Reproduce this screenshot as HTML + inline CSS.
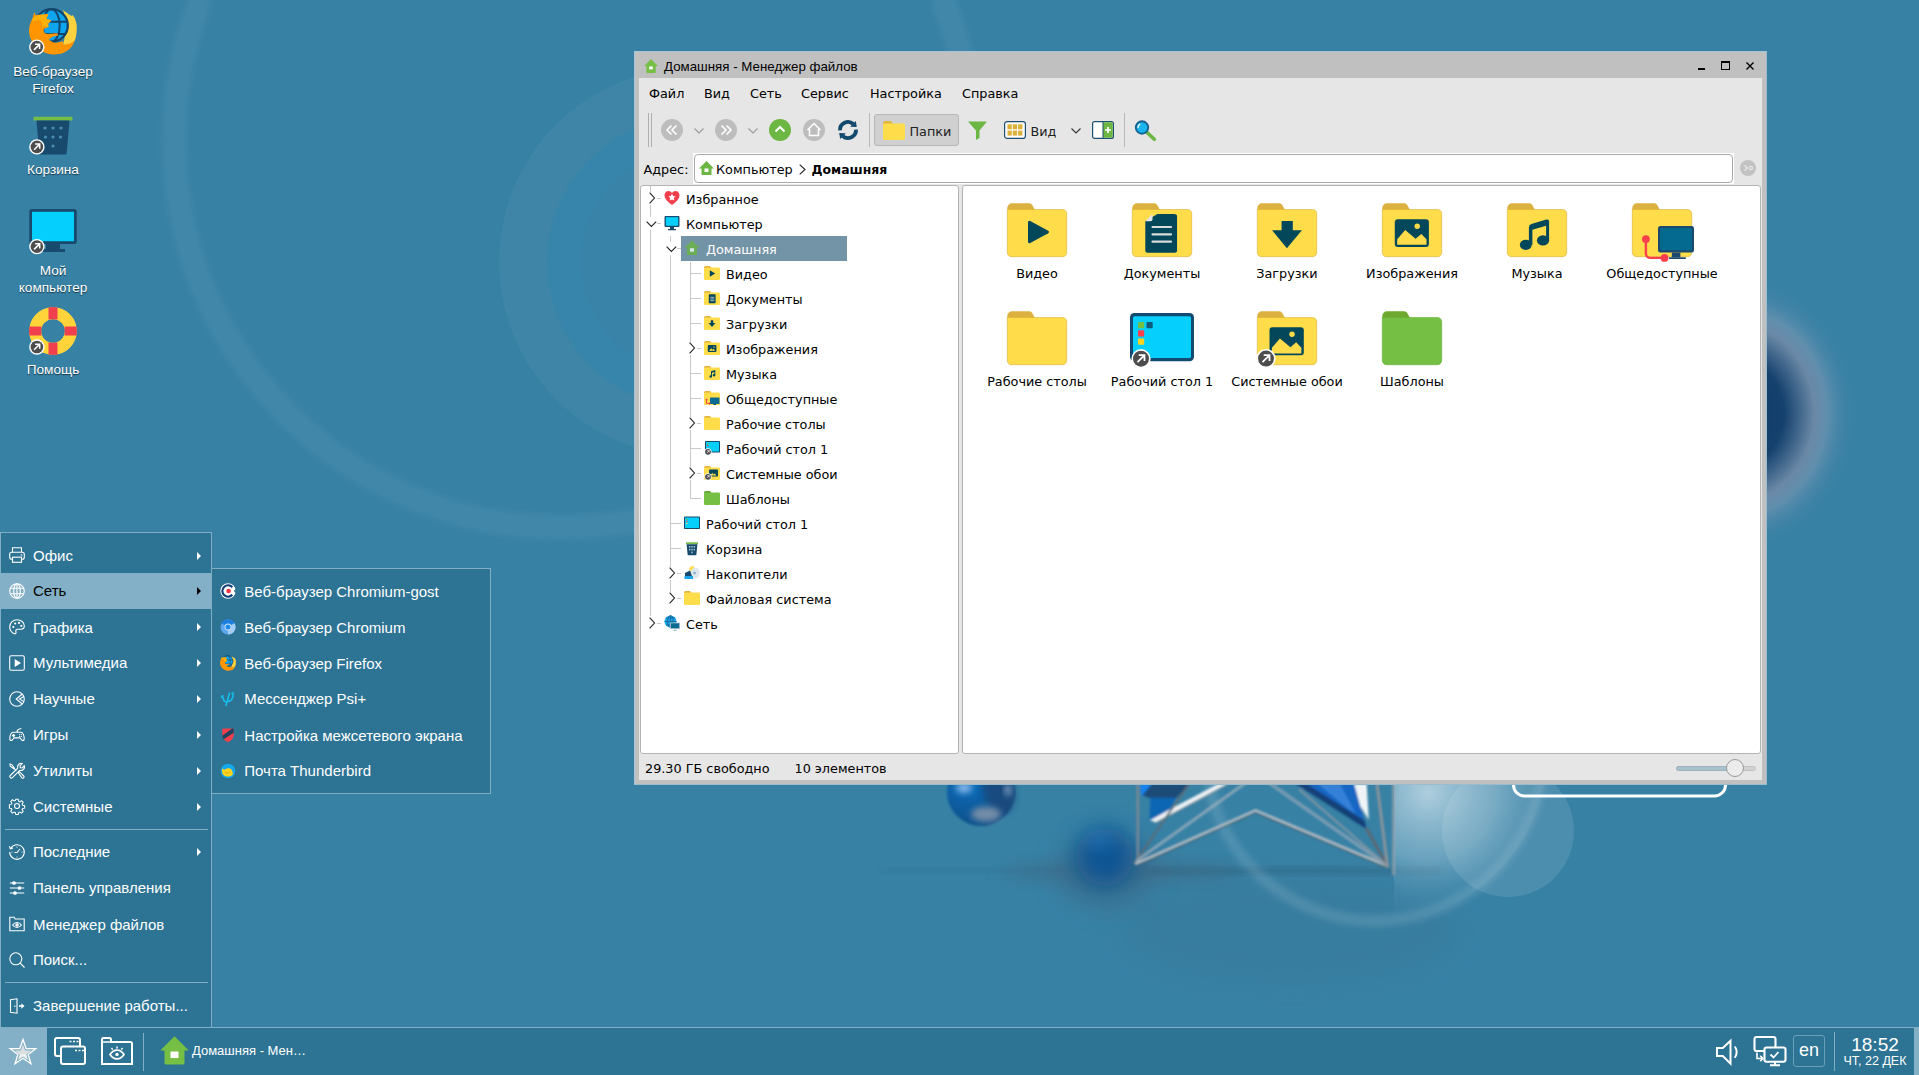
<!DOCTYPE html>
<html lang="ru">
<head>
<meta charset="utf-8">
<title>Рабочий стол</title>
<style>
*{box-sizing:border-box;margin:0;padding:0}
html,body{width:1919px;height:1075px;overflow:hidden;background:#3781a5}
body{position:relative;font-family:"Liberation Sans",sans-serif;color:#fff}
.abs{position:absolute}
svg{display:block;overflow:visible}
#wall{position:absolute;left:0;top:0;width:1919px;height:1075px}
/* desktop icons */
.dico{position:absolute;width:106px;left:0;text-align:center;font-size:13.600px;line-height:17px;color:#fff;text-shadow:0 1px 1px rgba(0,0,0,.6)}
.dico svg{position:absolute}
/* start menu */
#menu{position:absolute;left:0;top:532px;width:212px;height:495px;background:#2d7394;border:1px solid #80aec5;border-bottom:none}
.mi{position:absolute;left:-1px;width:212px;height:36px;font-size:15px;line-height:36px;color:#fff;white-space:nowrap}
.mi span{position:absolute;left:33px;top:.7px}
.mi svg.ic{position:absolute;left:9px;top:10px;width:16px;height:16px;fill:none;stroke:#fff;stroke-width:1.1}
.mi i{position:absolute;left:197px;top:14.300px;width:0;height:0;border-left:4.500px solid #fff;border-top:4px solid transparent;border-bottom:4px solid transparent}
.mi.sel{background:#84b0c7;color:#000}
.mi.sel i{border-left-color:#000}
.msep{position:absolute;left:4px;width:203px;height:1px;background:#80aec5}
#sub{position:absolute;left:211px;top:568px;width:280px;height:226px;background:#2d7394;border:1px solid #80aec5}
.si{position:absolute;left:0;width:278px;height:36px;font-size:15px;line-height:36px;color:#fff;white-space:nowrap}
.si span{position:absolute;left:32.300px;top:.8px}
.si svg{position:absolute;left:8px;top:10px;width:16px;height:16px}
/* taskbar */
#tb{position:absolute;left:0;top:1027px;width:1919px;height:48px;background:#2d7394;border-top:1px solid #80aec5}
#tb svg{position:absolute}
/* window */
#win{position:absolute;left:634px;top:51px;width:1133px;height:734px;background:#c0c0c0;box-shadow:inset 1px 1px 0 #a9c6d4,inset -1px -1px 0 #9dbccb}
#wtitle{position:absolute;left:0;top:.8px;width:100%;height:27px;font-size:13.300px;line-height:27px;color:#000}
#wbody{position:absolute;left:5px;top:27px;width:1123px;height:702px;background:#e6e6e6;font-family:"DejaVu Sans",sans-serif;font-size:12.8px;color:#000}
#wbody svg{position:absolute}
.pane{position:absolute;background:#fff;border:1px solid #b4b4b4;border-radius:3px}
.t{position:absolute;white-space:nowrap;line-height:16px}
.tr{position:absolute;white-space:nowrap;line-height:25px;height:25px}
.fl{position:absolute;width:140px;text-align:center;white-space:nowrap;line-height:16px}
</style>
</head>
<body>
<svg id="wall" viewBox="0 0 1919 1075">
<defs>
<filter id="b3" x="-50%" y="-50%" width="200%" height="200%"><feGaussianBlur stdDeviation="3"/></filter>
<filter id="b1" x="-50%" y="-50%" width="200%" height="200%"><feGaussianBlur stdDeviation="1"/></filter>
<filter id="b8" x="-50%" y="-50%" width="200%" height="200%"><feGaussianBlur stdDeviation="8"/></filter>
<filter id="b11" x="-80%" y="-80%" width="260%" height="260%"><feGaussianBlur stdDeviation="11"/></filter>
<filter id="b14" x="-50%" y="-50%" width="200%" height="200%"><feGaussianBlur stdDeviation="14"/></filter>
<radialGradient id="gball" cx="30%" cy="35%" r="85%"><stop offset="0" stop-color="#1272c4"/><stop offset=".45" stop-color="#0a5c9e"/><stop offset="1" stop-color="#174a80"/></radialGradient>
<radialGradient id="gglow" cx="50%" cy="50%" r="50%"><stop offset="0" stop-color="#c4dce8" stop-opacity=".85"/><stop offset=".5" stop-color="#9cc3d6" stop-opacity=".5"/><stop offset="1" stop-color="#3781a5" stop-opacity="0"/></radialGradient>
<radialGradient id="gdark" cx="50%" cy="50%" r="50%"><stop offset="0" stop-color="#103a66"/><stop offset=".36" stop-color="#15416e"/><stop offset=".5" stop-color="#456a8e"/><stop offset=".6" stop-color="#6a88a6"/><stop offset=".7" stop-color="#6590ae" stop-opacity=".9"/><stop offset=".83" stop-color="#4a86a8" stop-opacity=".45"/><stop offset=".96" stop-color="#3781a5" stop-opacity="0"/></radialGradient>
<clipPath id="cglow"><rect x="1394" y="780" width="300" height="200"/></clipPath><clipPath id="cring"><circle cx="1375" cy="752" r="172"/></clipPath>
</defs>
<rect width="1919" height="1075" fill="#3781a5"/>
<!-- faint arcs -->
<path d="M198.300 6A386.800 386.800 0 0 0 560.500 527.400A410 386.800 0 0 0 944 4" fill="none" stroke="#fff" stroke-opacity=".05" stroke-width="25" stroke-linecap="round" filter="url(#b3)"/>
<circle cx="693" cy="262" r="194" fill="#fff" fill-opacity=".038"/><circle cx="693" cy="262" r="146" fill="#3486ac" fill-opacity=".65"/>
<circle cx="693" cy="262" r="112" fill="#3b82a6" fill-opacity=".5"/>
<!-- dark sphere right of window -->
<ellipse cx="1738" cy="413" rx="127" ry="146" fill="url(#gdark)"/>
<!-- horizon shadow -->
<rect x="880" y="869" width="220" height="3" fill="#2b5f7e" opacity=".3" filter="url(#b3)"/><rect x="1130" y="868" width="310" height="6" fill="#2f607c" opacity=".55" filter="url(#b3)"/>
<ellipse cx="1290" cy="930" rx="170" ry="55" fill="#3a6f8c" opacity=".22" filter="url(#b14)"/>
<ellipse cx="1120" cy="872" rx="120" ry="10" fill="#3f6781" opacity=".55" filter="url(#b8)"/>
<!-- blurry blue blob -->
<ellipse cx="1106" cy="872" rx="46" ry="32" fill="#3d6a88" opacity=".85" filter="url(#b14)"/>
<circle cx="1105" cy="857" r="29" fill="#0f5494" filter="url(#b11)"/>
<ellipse cx="1100" cy="840" rx="13" ry="8" fill="#2f86d0" opacity=".45" filter="url(#b8)"/>
<!-- glass sphere -->
<circle cx="981" cy="792" r="34" fill="url(#gball)" filter="url(#b1)"/>
<path d="M985 760a34 34 0 0 1 26 50c-8 6-18 2-24-8-5-9-8-24-2-42z" fill="#1b4777" opacity=".75" filter="url(#b3)"/>
<ellipse cx="986" cy="814" rx="15" ry="7.500" fill="#8796aa" opacity=".85" filter="url(#b3)"/>
<ellipse cx="964" cy="788" rx="8" ry="5" fill="#9cc4f2" opacity=".85" filter="url(#b3)"/>
<ellipse cx="1008" cy="790" rx="3" ry="6" fill="#b8cfe8" opacity=".7" filter="url(#b3)"/>
<!-- glow behind star -->
<g clip-path="url(#cring)"><g clip-path="url(#cglow)"><circle cx="1428" cy="792" r="135" fill="url(#gglow)"/></g></g>
<!-- big thin ring -->
<circle cx="1375" cy="752" r="169" fill="none" stroke="#fff" stroke-opacity=".12" stroke-width="11" filter="url(#b3)"/>
<!-- translucent disc -->
<circle cx="1508" cy="831" r="66" fill="#fff" fill-opacity=".105"/>
<!-- star structure -->
<g filter="url(#b1)" fill="none" stroke-linecap="round">
<path d="M1140 784h12l-1.800 13.500-8.500-2z" fill="#1482ee" stroke="none"/>
<path d="M1151.500 784h38l-13 14h-26.500l-7.600-2.800z" fill="#1a4b78" stroke="none"/>
<path d="M1150.200 797.800h26.100l-6.600 11.700-13.700 12.400-6.400-2.600z" fill="#0f66b4" stroke="none"/>
<path d="M1218 784L1169.700 809.500 1150.200 820.200 1156 822.600 1200 799.800 1228 784z" fill="#eef2f5" stroke="none"/>
<path d="M1228 784L1156 822.600" stroke="#7d8a95" stroke-width="1.200"/>
<path d="M1137.800 784v76" stroke="#7f8b95" stroke-width="2.600" opacity=".9"/>
<path d="M1189 784L1134.600 863" stroke="#5d6a75" stroke-width="2"/>
<path d="M1244 784L1137.200 860.300" stroke="#9fb0bc" stroke-width="3" opacity=".75"/>
<path d="M1136 863.500L1255.500 810.400 1387.500 866" stroke="#b0bac2" stroke-width="2.600" stroke-linejoin="miter"/>
<path d="M1137 865.500L1255.500 812.800 1386 867.500" stroke="#46535e" stroke-width="1" stroke-linejoin="miter"/>
<path d="M1270.800 784L1387.500 866" stroke="#93a7b6" stroke-width="3.500" opacity=".7"/>
<path d="M1295.800 784h58.400l12.500 45.200-20.900-16.700z" fill="#1466c4" stroke="none"/>
<path d="M1318 784h22l16 30-9-6z" fill="#3c88de" stroke="none" opacity=".8"/>
<path d="M1295.800 784l70.900 45.200-2.500-9L1307 784z" fill="#123a6c" stroke="none" opacity=".85"/>
<path d="M1354.200 784h12.500l2.100 35.800-8.400-13.500z" fill="#f0f4f7" stroke="none"/>
<path d="M1366.700 829L1387.500 866" stroke="#5d6973" stroke-width="3"/>
<path d="M1300 790L1387.500 866" stroke="#8d9aa4" stroke-width="2.500" opacity=".7"/>
<path d="M1377 784L1387.500 866" stroke="#8a939b" stroke-width="3"/>
<path d="M1393.500 784v90" stroke="#93a1ab" stroke-width="3" opacity=".8"/>
</g>
<!-- white rounded rect outline -->
<rect x="1513.500" y="700" width="212" height="96" rx="11" fill="none" stroke="#fff" stroke-width="3"/>
</svg>
<div class="dico" style="top:0"><svg style="left:29px;top:7px;width:48px;height:48px" viewBox="0 0 48 48"><path d="M33.500 3.100C38 6 41 8 42.400 9l1.100-1c1.500 1.500 2.300 3.200 2.300 3.200 1.700 3.800 2.200 7.800 1.900 11.700-.2 4.100-.7 7.600-1.900 10.600-2.800 3.500-6.800 5.500-11.800 3.900 1-3.400 2-7.400 2.200-12.400.3-4 -.2-6-.6-7.700-.6-5.300-.6-10.300-1.100-14.200z" fill="#ffd23f"/><circle cx="22.500" cy="18.500" r="16.300" fill="#0da5ef" stroke="#14456b" stroke-width="2.300"/><g fill="none" stroke="#14456b" stroke-width="2"><ellipse cx="22.300" cy="18.500" rx="8.400" ry="16.300"/><path d="M7 14.800H38.500M8 27.100H37"/></g><path d="M5.300 5l1.500 3.500c3.200-1.200 6.200-1.300 8.800-.9l3.900-.6-2.200 4.700 5 1.700-3.300 3.400.6 3.300-4.500 1.700c-.6 1.200-.6 2.200 0 3.300.9 1.400 1.900 1.900 3.300 2l10.100-.9.500 2.300-5 1.100-4.400 2.800c2.400 2.100 4.400 3.100 6.600 3.300 2.800 0 5.800-.7 7.800-1.700v3.400c4 .6 8-.9 11.800-3.900-1.800 5.500-5.800 10-11.800 12.500-4 1.500-8 1.700-12.200 1.200C15 46.500 8 42 4 36 1 31.500 0 27.500 0 24c0-5 1.500-9 3.400-12.300.6-2.200 1.400-4.700 1.900-6.700z" fill="#ff9500"/><path d="M3.400 11.700C6 9 10 7.500 15.600 7.600l3.900-.6-2.200 4.700 5 1.700-3.300 3.400.6 3.300-6.100-.6-1.800-6.100c-3.700-.4-6.200.1-8.300 1.100z" fill="#ffb000"/><circle cx="7.8" cy="40.1" r="7.700" fill="#fff"/><circle cx="7.8" cy="40.1" r="6.300" fill="#4d4d4d"/><path d="M5.0 42.9l5.300-5.300M6.0 37.300000000000004h4.600v4.600" fill="none" stroke="#fff" stroke-width="1.500"/></svg><div class="abs" style="left:0;top:63px;width:106px">Веб-браузер<br>Firefox</div></div>
<div class="dico" style="top:113px"><svg style="left:29px;top:0;width:48px;height:48px" viewBox="0 0 48 48"><path d="M4.500 3.800h39v3.700h-39z" fill="#76bf45"/><path d="M7.500 7.500h33l-2.800 32.500a1.500 1.500 0 0 1-1.500 1.400H11.800a1.500 1.500 0 0 1-1.500-1.400z" fill="#174a6c"/><g fill="#4b8db3"><circle cx="16" cy="15" r="1.600"/><circle cx="24" cy="15" r="1.600"/><circle cx="32" cy="15" r="1.600"/><circle cx="16.500" cy="24" r="1.600"/><circle cx="24" cy="24" r="1.600"/><circle cx="31.500" cy="24" r="1.600"/><circle cx="24" cy="33" r="1.600"/></g><circle cx="7.9" cy="33.9" r="7.700" fill="#fff"/><circle cx="7.9" cy="33.9" r="6.300" fill="#4d4d4d"/><path d="M5.1000000000000005 36.699999999999996l5.300-5.300M6.1000000000000005 31.099999999999998h4.600v4.600" fill="none" stroke="#fff" stroke-width="1.500"/></svg><div class="abs" style="left:0;top:48px;width:106px">Корзина</div></div>
<div class="dico" style="top:209px"><svg style="left:29px;top:0;width:48px;height:48px" viewBox="0 0 48 48"><rect x=".3" y="0" width="47.500" height="35" rx="2.500" fill="#174a6c"/><rect x="3" y="2.800" width="42" height="29.400" fill="#05d0fd"/><path d="M17 35h14v5H17z" fill="#174a6c"/><path d="M12 40h24v3H12z" fill="#174a6c"/><circle cx="7.9" cy="37.6" r="7.700" fill="#fff"/><circle cx="7.9" cy="37.6" r="6.300" fill="#4d4d4d"/><path d="M5.1000000000000005 40.4l5.300-5.300M6.1000000000000005 34.800000000000004h4.600v4.600" fill="none" stroke="#fff" stroke-width="1.500"/></svg><div class="abs" style="left:0;top:53px;width:106px">Мой<br>компьютер</div></div>
<div class="dico" style="top:307px"><svg style="left:29px;top:0;width:48px;height:48px" viewBox="0 0 48 48"><defs><clipPath id="lb"><path d="M24 0a24 24 0 1 0 0 48 24 24 0 1 0 0-48zm0 12.400a11.600 11.600 0 1 1 0 23.200 11.600 11.600 0 1 1 0-23.200z" clip-rule="evenodd"/></clipPath></defs><g clip-path="url(#lb)"><circle cx="24" cy="24" r="17.800" fill="none" stroke="#ffd43b" stroke-width="12.400"/><g fill="#f0404e"><path d="M19.500 0h9v12.500h-9z"/><path d="M19.500 35.500h9V48h-9z"/><path d="M0 19.500h12.500v9H0z"/><path d="M35.500 19.500H48v9H35.500z"/></g><circle cx="24" cy="24" r="24" fill="none" stroke="#3781a5" stroke-width="0"/></g><circle cx="7.9" cy="40" r="7.700" fill="#fff"/><circle cx="7.9" cy="40" r="6.300" fill="#4d4d4d"/><path d="M5.1000000000000005 42.8l5.300-5.300M6.1000000000000005 37.2h4.600v4.600" fill="none" stroke="#fff" stroke-width="1.500"/></svg><div class="abs" style="left:0;top:54px;width:106px">Помощь</div></div>
<div id="win">
<svg class="abs" style="left:10px;top:8px;width:14px;height:14px" viewBox="0 0 14 14"><path d="M7 0L14 7h-2.300v6.300a.7.7 0 0 1-.7.700H3a.7.7 0 0 1-.7-.700V7H0z" fill="#76bf45"/><rect x="5.200" y="7.400" width="3.600" height="3" fill="#fff"/></svg>
<div id="wtitle"><span class="abs" style="left:30px;top:1px">Домашняя - Менеджер файлов</span></div>
<div class="abs" style="left:1064px;top:16.500px;width:6.500px;height:2.500px;background:#000"></div>
<div class="abs" style="left:1087px;top:10.300px;width:9.200px;height:8.700px;border:1.200px solid #000;border-top-width:2.500px"></div>
<svg class="abs" style="left:1112px;top:11px;width:8px;height:8px" viewBox="0 0 8 8"><path d="M.5 .5l7 7M7.500 .5l-7 7" stroke="#000" stroke-width="1.400"/></svg>
<div id="wbody">
<div class="t" style="left:10px;top:7.5px">Файл</div>
<div class="t" style="left:65px;top:7.5px">Вид</div>
<div class="t" style="left:111px;top:7.5px">Сеть</div>
<div class="t" style="left:162px;top:7.5px">Сервис</div>
<div class="t" style="left:231px;top:7.5px">Настройка</div>
<div class="t" style="left:323px;top:7.5px">Справка</div>
<div class="abs" style="left:9px;top:35px;width:1px;height:34px;background:#b0b0b0"></div>
<div class="abs" style="left:12px;top:35px;width:1px;height:34px;background:#b0b0b0"></div>
<svg style="left:22px;top:41px;width:22px;height:22px" viewBox="0 0 22 22"><circle cx="11" cy="11" r="11" fill="#bdbdbd"/><path d="M10.500 6.500L6 11l4.500 4.500M15.500 6.500L11 11l4.500 4.500" fill="none" stroke="#fff" stroke-width="1.600"/></svg>
<svg style="left:76px;top:41px;width:22px;height:22px" viewBox="0 0 22 22"><circle cx="11" cy="11" r="11" fill="#bdbdbd"/><path d="M6.500 6.500L11 11l-4.500 4.500M11.500 6.500L16 11l-4.500 4.500" fill="none" stroke="#fff" stroke-width="1.600"/></svg>
<svg style="left:130px;top:41px;width:22px;height:22px" viewBox="0 0 22 22"><circle cx="11" cy="11" r="11" fill="#6cb644"/><path d="M6.500 12.500L11 8l4.500 4.500" fill="none" stroke="#fff" stroke-width="2"/></svg>
<svg style="left:164px;top:41px;width:22px;height:22px" viewBox="0 0 22 22"><circle cx="11" cy="11" r="11" fill="#bdbdbd"/><path d="M4.500 11L11 4.500 17.500 11M6.500 10v6.500h9V10" fill="none" stroke="#fff" stroke-width="1.500"/></svg>
<svg style="left:55px;top:49.5px;width:10px;height:6px" viewBox="0 0 10 6"><path d="M.5 .5L5 5 9.500 .5" fill="none" stroke="#9a9a9a" stroke-width="1.100"/></svg>
<svg style="left:109px;top:49.5px;width:10px;height:6px" viewBox="0 0 10 6"><path d="M.5 .5L5 5 9.500 .5" fill="none" stroke="#9a9a9a" stroke-width="1.100"/></svg>
<svg style="left:198px;top:41px;width:22px;height:22px" viewBox="0 0 22 22"><path d="M3 11.300A8 8 0 0 1 16.300 5M19 10.700A8 8 0 0 1 5.700 17" fill="none" stroke="#124a6e" stroke-width="3.900"/><path d="M18.800 1.900l1 6.200-6.600-.4zM3.200 20.100l-1-6.200 6.600.4z" fill="#124a6e"/></svg>
<div class="abs" style="left:230px;top:35px;width:1px;height:34px;background:#b8b8b8"></div>
<div class="abs" style="left:235px;top:36px;width:85px;height:32px;background:#d0d0d0;border:1px solid #b6b6b6;border-radius:3px"></div>
<svg style="left:244px;top:42.5px;width:22px;height:19px" viewBox="0 0 22 19"><path d="M0 2a2 2 0 0 1 2-2h6l2 3H0z" fill="#e3b53f"/><rect x="0" y="2.500" width="22" height="16.500" rx="1.800" fill="#ffdc4a"/></svg>
<div class="t" style="left:270.5px;top:45.5px;color:#222">Папки</div>
<svg style="left:329px;top:42.5px;width:19px;height:19px" viewBox="0 0 19 19"><path d="M0 .5h19l-7.500 9v7.500l-3.500 2V9.500z" fill="#6cb644"/></svg>
<svg style="left:365px;top:43px;width:22px;height:18px" viewBox="0 0 22 18"><rect x=".6" y=".6" width="20.800" height="16.800" rx="2.500" fill="#fff" stroke="#1d4f73" stroke-width="1.200"/><g fill="#ddb03a"><rect x="3.500" y="3.300" width="4.300" height="5"/><rect x="8.800" y="3.300" width="4.300" height="5"/><rect x="14.100" y="3.300" width="4.300" height="5"/><rect x="3.500" y="9.600" width="4.300" height="5"/><rect x="8.800" y="9.600" width="4.300" height="5"/><rect x="14.100" y="9.600" width="4.300" height="5"/></g></svg>
<div class="t" style="left:391.5px;top:45.5px;color:#222">Вид</div>
<svg style="left:431.5px;top:49.5px;width:10px;height:6px" viewBox="0 0 10 6"><path d="M.5 .5L5 5 9.500 .5" fill="none" stroke="#333" stroke-width="1.100"/></svg>
<svg style="left:453px;top:43px;width:22px;height:18px" viewBox="0 0 22 18"><rect x=".6" y=".6" width="20.800" height="16.800" rx="2" fill="#fff" stroke="#1d4f73" stroke-width="1.200"/><path d="M11 1.200h8.400a1.400 1.400 0 0 1 1.400 1.400v12.800a1.400 1.400 0 0 1-1.400 1.400H11z" fill="#6cb644"/><path d="M11 1v16" stroke="#1d4f73" stroke-width="1"/><path d="M13 9h6M16 6v6" stroke="#fff" stroke-width="1.700"/></svg>
<div class="abs" style="left:485px;top:35px;width:1px;height:34px;background:#b8b8b8"></div>
<svg style="left:495px;top:42px;width:22px;height:21px" viewBox="0 0 22 21"><path d="M12 11.500l8.300 7.800" stroke="#6cb644" stroke-width="3.600" stroke-linecap="round"/><circle cx="8" cy="7.500" r="6.200" fill="#19b5f1" stroke="#17628f" stroke-width="1.900"/><path d="M4 7.500a4 4 0 0 1 1.800-3.300" fill="none" stroke="#fff" stroke-width="1.300" stroke-linecap="round"/></svg>
<div class="t" style="left:4.5px;top:83.5px">Адрес:</div>
<div class="abs" style="left:54px;top:75px;width:1041px;height:31px;background:#fff"></div><div class="abs" style="left:55.400px;top:76.400px;width:1038.200px;height:28.400px;background:#fff;border:1px solid #ababab;border-radius:4px"></div>
<svg style="left:59.5px;top:83px;width:15px;height:14px" viewBox="0 0 15 14"><path d="M7.500 0L15 7.500h-2.500v6a.5.500 0 0 1-.5.500H3a.5.500 0 0 1-.5-.500v-6H0z" fill="#6cb644"/><rect x="5.500" y="7.500" width="4" height="3.500" fill="#fff"/></svg>
<div class="t" style="left:77px;top:83.5px">Компьютер</div>
<svg style="left:160px;top:85.5px;width:7px;height:11px" viewBox="0 0 7 11"><path d="M.7 .7L6 5.500 .7 10.300" fill="none" stroke="#222" stroke-width="1.100"/></svg>
<div class="t" style="left:172.5px;top:83.5px;font-weight:bold;font-size:12.400px">Домашняя</div>
<svg style="left:1101px;top:82px;width:16px;height:16px" viewBox="0 0 16 16"><circle cx="8" cy="8" r="8" fill="#c2c2c2"/><path d="M4.500 5.200L7.300 8 4.500 10.800" fill="none" stroke="#e6e6e6" stroke-width="1.300"/><circle cx="10.800" cy="8" r="1.600" fill="none" stroke="#e6e6e6" stroke-width="1.200"/></svg>
<div class="pane" style="left:1px;top:107px;width:319px;height:569px"></div>
<div class="pane" style="left:323px;top:107px;width:799px;height:569px"></div>
<div class="t" style="left:6px;top:682.5px">29.30 ГБ свободно</div>
<div class="t" style="left:155.5px;top:682.5px">10 элементов</div>
<div class="abs" style="left:1037px;top:687.5px;width:80px;height:5px;border-radius:3px;background:#d2d2d2;border:1px solid #c0c0c0"></div>
<div class="abs" style="left:1037px;top:687.5px;width:58px;height:5px;border-radius:3px;background:#a9c0cd;border:1px solid #9ab2c0"></div>
<div class="abs" style="left:1087px;top:681px;width:18px;height:18px;border-radius:9px;background:#ececec;border:1px solid #9a9a9a"></div>
<div class="abs" style="left:11px;top:108px;width:1px;height:430px;background:#c9c9c9"></div>
<div class="abs" style="left:31px;top:158px;width:1px;height:363px;background:#c9c9c9"></div>
<div class="abs" style="left:51px;top:184px;width:1px;height:237px;background:#c9c9c9"></div>
<div class="abs" style="left:42px;top:158px;width:166px;height:25px;background:#7393a7"></div>
<div class="abs" style="left:7px;top:114px;width:12px;height:13px;background:#fff"></div>
<div class="abs" style="left:18px;top:120px;width:4px;height:1px;background:#c9c9c9"></div>
<svg style="left:9.6px;top:114px;width:7px;height:12px" viewBox="0 0 7 12"><path d="M.6 .6L5.500 6 .6 11.400" fill="none" stroke="#222" stroke-width="1.100"/></svg>
<svg style="left:25px;top:112px;width:16px;height:16px" viewBox="0 0 16 16"><path d="M8 15C3 11.500 .5 8.500 .5 5.300.5 2.800 2.300 1 4.500 1 6 1 7.300 1.800 8 3c.7-1.200 2-2 3.500-2 2.200 0 4 1.800 4 4.300 0 3.200-2.500 6.200-7.500 9.700z" fill="#f0404e"/><path d="M8 3.800l1.100 2.300 2.500.3-1.800 1.700.5 2.500L8 9.400l-2.300 1.200.5-2.500-1.800-1.700 2.500-.3z" fill="#fff"/></svg>
<div class="t" style="left:47px;top:113.5px">Избранное</div>
<div class="abs" style="left:7px;top:139px;width:12px;height:13px;background:#fff"></div>
<div class="abs" style="left:18px;top:145px;width:4px;height:1px;background:#c9c9c9"></div>
<svg style="left:7.2px;top:143px;width:12px;height:7px" viewBox="0 0 12 7"><path d="M.6 .6L5.400 5.500 10.200 .6" fill="none" stroke="#222" stroke-width="1.100"/></svg>
<svg style="left:25px;top:137px;width:16px;height:16px" viewBox="0 0 16 16"><rect x=".5" y="1" width="15" height="11" rx="1" fill="#174a6c"/><rect x="1.800" y="2.200" width="12.400" height="8.600" fill="#05d0fd"/><path d="M6 12h4v2H6zM4 14h8v1.200H4z" fill="#174a6c"/></svg>
<div class="t" style="left:47px;top:138.5px">Компьютер</div>
<div class="abs" style="left:27px;top:164px;width:12px;height:13px;background:#fff"></div>
<div class="abs" style="left:38px;top:170px;width:4px;height:1px;background:#c9c9c9"></div>
<svg style="left:27.2px;top:168px;width:12px;height:7px" viewBox="0 0 12 7"><path d="M.6 .6L5.400 5.500 10.200 .6" fill="none" stroke="#222" stroke-width="1.100"/></svg>
<svg style="left:45px;top:162px;width:16px;height:16px" viewBox="0 0 16 16"><path d="M8 .5L15.500 8H13v6.500a.5.500 0 0 1-.5.500h-9a.5.500 0 0 1-.5-.500V8H.5z" fill="#6aae55"/><rect x="6" y="8.200" width="4" height="3.500" fill="#d5e4e4"/></svg>
<div class="t" style="left:67px;top:163.5px;color:#fff">Домашняя</div>
<div class="abs" style="left:52px;top:195px;width:10px;height:1px;background:#c9c9c9"></div>
<svg style="left:65px;top:187px;width:16px;height:16px" viewBox="0 0 16 16"><path d="M0 2.500a1.500 1.500 0 0 1 1.500-1.500h4.500l1.500 2H0z" fill="#e0b340"/><rect x="0" y="2.500" width="16" height="12.500" rx="1.300" fill="#ffdc4a"/><path d="M5.800 5.300v6.400l5.400-3.200z" fill="#02475a"/></svg>
<div class="t" style="left:87px;top:188.5px">Видео</div>
<div class="abs" style="left:52px;top:220px;width:10px;height:1px;background:#c9c9c9"></div>
<svg style="left:65px;top:212px;width:16px;height:16px" viewBox="0 0 16 16"><path d="M0 2.500a1.500 1.500 0 0 1 1.500-1.500h4.500l1.500 2H0z" fill="#e0b340"/><rect x="0" y="2.500" width="16" height="12.500" rx="1.300" fill="#ffdc4a"/><rect x="4.800" y="4.300" width="6.800" height="9" rx=".6" fill="#02475a"/><path d="M6.300 7.300h4M6.300 9h4M6.300 10.700h4" stroke="#cfd8da" stroke-width=".8"/></svg>
<div class="t" style="left:87px;top:213.5px">Документы</div>
<div class="abs" style="left:52px;top:245px;width:10px;height:1px;background:#c9c9c9"></div>
<svg style="left:65px;top:237px;width:16px;height:16px" viewBox="0 0 16 16"><path d="M0 2.500a1.500 1.500 0 0 1 1.500-1.500h4.500l1.500 2H0z" fill="#e0b340"/><rect x="0" y="2.500" width="16" height="12.500" rx="1.300" fill="#ffdc4a"/><path d="M6.800 5.200h2.400v2.800h2.300L8 12 4.500 8h2.300z" fill="#02475a"/></svg>
<div class="t" style="left:87px;top:238.5px">Загрузки</div>
<div class="abs" style="left:47px;top:264px;width:12px;height:13px;background:#fff"></div>
<div class="abs" style="left:58px;top:270px;width:4px;height:1px;background:#c9c9c9"></div>
<svg style="left:49.6px;top:264px;width:7px;height:12px" viewBox="0 0 7 12"><path d="M.6 .6L5.500 6 .6 11.400" fill="none" stroke="#222" stroke-width="1.100"/></svg>
<svg style="left:65px;top:262px;width:16px;height:16px" viewBox="0 0 16 16"><path d="M0 2.500a1.500 1.500 0 0 1 1.500-1.500h4.500l1.500 2H0z" fill="#e0b340"/><rect x="0" y="2.500" width="16" height="12.500" rx="1.300" fill="#ffdc4a"/><rect x="3.800" y="5" width="8.600" height="7" rx="1" fill="#02475a"/><path d="M5 10.800l2.200-2.600 1.500 1.500 1-1 1.500 2.100z" fill="#ffdc4a"/><circle cx="10" cy="7" r=".7" fill="#ffdc4a"/></svg>
<div class="t" style="left:87px;top:263.5px">Изображения</div>
<div class="abs" style="left:52px;top:295px;width:10px;height:1px;background:#c9c9c9"></div>
<svg style="left:65px;top:287px;width:16px;height:16px" viewBox="0 0 16 16"><path d="M0 2.500a1.500 1.500 0 0 1 1.500-1.500h4.500l1.500 2H0z" fill="#e0b340"/><rect x="0" y="2.500" width="16" height="12.500" rx="1.300" fill="#ffdc4a"/><path d="M7 6.200l4.300-1.200v5.200a1.300 1.300 0 1 1-1-1.250V7L8 7.700v3.800a1.300 1.300 0 1 1-1-1.250z" fill="#02475a"/></svg>
<div class="t" style="left:87px;top:288.5px">Музыка</div>
<div class="abs" style="left:52px;top:320px;width:10px;height:1px;background:#c9c9c9"></div>
<svg style="left:65px;top:312px;width:16px;height:16px" viewBox="0 0 16 16"><path d="M0 2.500a1.500 1.500 0 0 1 1.500-1.500h4.500l1.500 2H0z" fill="#e0b340"/><rect x="0" y="2.500" width="16" height="12.500" rx="1.300" fill="#ffdc4a"/><rect x="6" y="7.500" width="9.500" height="6.500" rx=".5" fill="#0a6c93"/><path d="M9.500 14h2.500v1H9.500z" fill="#174a6c"/><path d="M2.500 10v3.500h3" fill="none" stroke="#f0404e" stroke-width=".9"/><circle cx="2.500" cy="9.700" r="1" fill="#f0404e"/><circle cx="5.500" cy="13.500" r=".9" fill="#f0404e"/></svg>
<div class="t" style="left:87px;top:313.5px">Общедоступные</div>
<div class="abs" style="left:47px;top:339px;width:12px;height:13px;background:#fff"></div>
<div class="abs" style="left:58px;top:345px;width:4px;height:1px;background:#c9c9c9"></div>
<svg style="left:49.6px;top:339px;width:7px;height:12px" viewBox="0 0 7 12"><path d="M.6 .6L5.500 6 .6 11.400" fill="none" stroke="#222" stroke-width="1.100"/></svg>
<svg style="left:65px;top:337px;width:16px;height:16px" viewBox="0 0 16 16"><path d="M0 2.500a1.500 1.500 0 0 1 1.500-1.500h4.500l1.500 2H0z" fill="#e0b340"/><rect x="0" y="2.500" width="16" height="12.500" rx="1.300" fill="#ffdc4a"/></svg>
<div class="t" style="left:87px;top:338.5px">Рабочие столы</div>
<div class="abs" style="left:52px;top:370px;width:10px;height:1px;background:#c9c9c9"></div>
<svg style="left:65px;top:362px;width:16px;height:16px" viewBox="0 0 16 16"><rect x="1" y="1" width="15" height="11.500" rx=".8" fill="#174a6c"/><rect x="2" y="2" width="13" height="9.500" fill="#05d0fd"/><rect x="3" y="3" width="1.300" height="1.300" fill="#6cb644"/><rect x="3" y="5" width="1.300" height="1.300" fill="#f0404e"/><circle cx="4" cy="11.800" r="3.600" fill="#fff"/><circle cx="4" cy="11.800" r="2.900" fill="#4a4a4a"/><path d="M2.800 13l2.300-2.300M3.300 10.600h1.900v1.900" stroke="#fff" stroke-width=".7" fill="none"/></svg>
<div class="t" style="left:87px;top:363.5px">Рабочий стол 1</div>
<div class="abs" style="left:47px;top:389px;width:12px;height:13px;background:#fff"></div>
<div class="abs" style="left:58px;top:395px;width:4px;height:1px;background:#c9c9c9"></div>
<svg style="left:49.6px;top:389px;width:7px;height:12px" viewBox="0 0 7 12"><path d="M.6 .6L5.500 6 .6 11.400" fill="none" stroke="#222" stroke-width="1.100"/></svg>
<svg style="left:65px;top:387px;width:16px;height:16px" viewBox="0 0 16 16"><path d="M0 2.500a1.500 1.500 0 0 1 1.500-1.500h4.500l1.500 2H0z" fill="#e0b340"/><rect x="0" y="2.500" width="16" height="12.500" rx="1.300" fill="#ffdc4a"/><rect x="5" y="4.500" width="9" height="7" rx=".8" fill="#02475a"/><path d="M6 10.500l2.300-2.500 1.500 1.500 1-1 1.700 2z" fill="#ffdc4a"/><circle cx="4" cy="11.800" r="3.600" fill="#fff"/><circle cx="4" cy="11.800" r="2.900" fill="#4a4a4a"/><path d="M2.800 13l2.300-2.300M3.300 10.600h1.900v1.900" stroke="#fff" stroke-width=".7" fill="none"/></svg>
<div class="t" style="left:87px;top:388.5px">Системные обои</div>
<div class="abs" style="left:52px;top:420px;width:10px;height:1px;background:#c9c9c9"></div>
<svg style="left:65px;top:412px;width:16px;height:16px" viewBox="0 0 16 16"><path d="M0 2.500a1.500 1.500 0 0 1 1.500-1.500h4.500l1.500 2H0z" fill="#5fa333"/><rect x="0" y="2.500" width="16" height="12.500" rx="1.300" fill="#76bf45"/></svg>
<div class="t" style="left:87px;top:413.5px">Шаблоны</div>
<div class="abs" style="left:32px;top:445px;width:10px;height:1px;background:#c9c9c9"></div>
<svg style="left:45px;top:437px;width:16px;height:16px" viewBox="0 0 16 16"><rect x="0" y="1.500" width="16" height="12.500" rx=".8" fill="#174a6c"/><rect x="1" y="2.500" width="14" height="10.500" fill="#05d0fd"/><rect x="2.200" y="3.700" width="1.300" height="1.300" fill="#6cb644"/><rect x="2.200" y="5.700" width="1.300" height="1.300" fill="#f0404e"/><rect x="2.200" y="7.700" width="1.300" height="1.300" fill="#ffdc4a"/></svg>
<div class="t" style="left:67px;top:438.5px">Рабочий стол 1</div>
<div class="abs" style="left:32px;top:470px;width:10px;height:1px;background:#c9c9c9"></div>
<svg style="left:45px;top:462px;width:16px;height:16px" viewBox="0 0 16 16"><path d="M2 2.300h12v1.900H2z" fill="#76bf45"/><path d="M2.600 4.200h10.800l-1 10.300a.8.800 0 0 1-.8.700H4.400a.8.800 0 0 1-.8-.7z" fill="#174a6c"/><g fill="#9dbfd3"><rect x="4.900" y="6" width="1.500" height="1.600"/><rect x="7.250" y="6" width="1.500" height="1.600"/><rect x="9.600" y="6" width="1.500" height="1.600"/><rect x="5" y="8.800" width="1.500" height="1.600"/><rect x="7.250" y="8.800" width="1.500" height="1.600"/><rect x="9.500" y="8.800" width="1.500" height="1.600"/><rect x="7.250" y="11.600" width="1.500" height="1.600"/></g></svg>
<div class="t" style="left:67px;top:463.5px">Корзина</div>
<div class="abs" style="left:27px;top:489px;width:12px;height:13px;background:#fff"></div>
<div class="abs" style="left:38px;top:495px;width:4px;height:1px;background:#c9c9c9"></div>
<svg style="left:29.6px;top:489px;width:7px;height:12px" viewBox="0 0 7 12"><path d="M.6 .6L5.500 6 .6 11.400" fill="none" stroke="#222" stroke-width="1.100"/></svg>
<svg style="left:45px;top:487px;width:16px;height:16px" viewBox="0 0 16 16"><circle cx="10.500" cy="8" r="5.500" fill="#dfe8ee"/><circle cx="10.500" cy="8" r="1.500" fill="#8fb5cc"/><path d="M5 3l4-2.500 1.200 1.800L6 6.500z" fill="#ffdc4a"/><path d="M1 8l5-2.500 2 5.500H1z" fill="#174a6c"/><path d="M.5 11h8.500v3H.5z" fill="#19a5ea"/></svg>
<div class="t" style="left:67px;top:488.5px">Накопители</div>
<div class="abs" style="left:27px;top:514px;width:12px;height:13px;background:#fff"></div>
<div class="abs" style="left:38px;top:520px;width:4px;height:1px;background:#c9c9c9"></div>
<svg style="left:29.6px;top:514px;width:7px;height:12px" viewBox="0 0 7 12"><path d="M.6 .6L5.500 6 .6 11.400" fill="none" stroke="#222" stroke-width="1.100"/></svg>
<svg style="left:45px;top:512px;width:16px;height:16px" viewBox="0 0 16 16"><path d="M0 2.500a1.500 1.500 0 0 1 1.500-1.500h4.500l1.500 2H0z" fill="#e0b340"/><rect x="0" y="2.500" width="16" height="12.500" rx="1.300" fill="#ffdc4a"/></svg>
<div class="t" style="left:67px;top:513.5px">Файловая система</div>
<div class="abs" style="left:7px;top:539px;width:12px;height:13px;background:#fff"></div>
<div class="abs" style="left:18px;top:545px;width:4px;height:1px;background:#c9c9c9"></div>
<svg style="left:9.6px;top:539px;width:7px;height:12px" viewBox="0 0 7 12"><path d="M.6 .6L5.500 6 .6 11.400" fill="none" stroke="#222" stroke-width="1.100"/></svg>
<svg style="left:25px;top:537px;width:16px;height:16px" viewBox="0 0 16 16"><circle cx="6.500" cy="6.500" r="6" fill="#19a5ea"/><path d="M6.500 .5v12M.5 6.500h12M2 3h9M2 10h9" stroke="#17628f" stroke-width=".8" fill="none"/><ellipse cx="6.500" cy="6.500" rx="2.800" ry="6" fill="none" stroke="#17628f" stroke-width=".8"/><rect x="6" y="7.500" width="10" height="6.500" rx=".5" fill="#b8c6cf"/><rect x="6.800" y="8.300" width="8.400" height="4.900" fill="#0a6c93"/><path d="M9 15.500h4M11 14v1.500" stroke="#b8c6cf" stroke-width="1"/></svg>
<div class="t" style="left:47px;top:538.5px">Сеть</div>
<svg style="left:368px;top:125px;width:60px;height:54px" viewBox="0 0 60 54"><path d="M.3 10V5a4.700 4.700 0 0 1 4.700-4.700H22.500a3 3 0 0 1 2.600 1.500L28.300 7.500H.3z" fill="#ddb140"/><path d="M.3 9.500V6.500H55.500a4.200 4.200 0 0 1 4.200 4.200V49.500a4.200 4.200 0 0 1-4.200 4.200H4.500A4.200 4.200 0 0 1 .3 49.500z" fill="#ffdc4a" stroke="#dcae35" stroke-width=".6"/><path d="M21 19.200a1.500 1.500 0 0 1 2.200-1.300l18 9.800a1.500 1.500 0 0 1 0 2.600l-18 9.800a1.500 1.500 0 0 1-2.200-1.300z" fill="#02475a"/></svg>
<div class="fl" style="left:328px;top:187.5px">Видео</div>
<svg style="left:493px;top:125px;width:60px;height:54px" viewBox="0 0 60 54"><path d="M.3 10V5a4.700 4.700 0 0 1 4.700-4.700H22.500a3 3 0 0 1 2.600 1.500L28.300 7.500H.3z" fill="#ddb140"/><path d="M.3 9.500V6.500H55.500a4.200 4.200 0 0 1 4.200 4.200V49.500a4.200 4.200 0 0 1-4.200 4.200H4.500A4.200 4.200 0 0 1 .3 49.500z" fill="#ffdc4a" stroke="#dcae35" stroke-width=".6"/><path d="M20.500 11h9.700a2 2 0 0 1 2 2v34.800a2 2 0 0 1-2 2H15.300a2 2 0 0 1-2-2V18.200z" fill="#02475a" transform="translate(13.300 0) scale(1.680 1) translate(-13.300 0)"/><path d="M13.300 18.200L20.500 11v5.200a2 2 0 0 1-2 2z" fill="#e4e4e4"/><path d="M20.500 24h18.500M20.500 31.400h18.500M20.500 38.700h18.500" stroke="#d8dcdc" stroke-width="2.200" stroke-linecap="round"/></svg>
<div class="fl" style="left:453px;top:187.5px">Документы</div>
<svg style="left:618px;top:125px;width:60px;height:54px" viewBox="0 0 60 54"><path d="M.3 10V5a4.700 4.700 0 0 1 4.700-4.700H22.500a3 3 0 0 1 2.600 1.500L28.300 7.500H.3z" fill="#ddb140"/><path d="M.3 9.500V6.500H55.500a4.200 4.200 0 0 1 4.200 4.200V49.500a4.200 4.200 0 0 1-4.200 4.200H4.500A4.200 4.200 0 0 1 .3 49.500z" fill="#ffdc4a" stroke="#dcae35" stroke-width=".6"/><path d="M24.600 17.900h11.200v9.300h9.100L29.900 45.300 15.100 27.200h9.500z" fill="#02475a"/></svg>
<div class="fl" style="left:578px;top:187.5px">Загрузки</div>
<svg style="left:743px;top:125px;width:60px;height:54px" viewBox="0 0 60 54"><path d="M.3 10V5a4.700 4.700 0 0 1 4.700-4.700H22.500a3 3 0 0 1 2.600 1.500L28.300 7.500H.3z" fill="#ddb140"/><path d="M.3 9.500V6.500H55.500a4.200 4.200 0 0 1 4.200 4.200V49.500a4.200 4.200 0 0 1-4.200 4.200H4.500A4.200 4.200 0 0 1 .3 49.500z" fill="#ffdc4a" stroke="#dcae35" stroke-width=".6"/><rect x="12.8" y="16.3" width="34.1" height="27.7" rx="3" fill="#02475a"/><path d="M15.200000000000001 41.8v-5.500l8-9.300 10.400 8.800 5.700-4.900 5.200 5.400v5.500z" fill="#ffdc4a" transform="translate(12.8 16.3) scale(1.0 1.0) translate(-12.8 -16.3)"/><circle cx="35.2037" cy="23.225" r="2.6939" fill="#ffdc4a"/></svg>
<div class="fl" style="left:703px;top:187.5px">Изображения</div>
<svg style="left:868px;top:125px;width:60px;height:54px" viewBox="0 0 60 54"><path d="M.3 10V5a4.700 4.700 0 0 1 4.700-4.700H22.500a3 3 0 0 1 2.600 1.500L28.300 7.500H.3z" fill="#ddb140"/><path d="M.3 9.500V6.500H55.500a4.200 4.200 0 0 1 4.200 4.200V49.500a4.200 4.200 0 0 1-4.200 4.200H4.500A4.200 4.200 0 0 1 .3 49.500z" fill="#ffdc4a" stroke="#dcae35" stroke-width=".6"/><path d="M21.900 24.500a3.500 3.500 0 0 1 2.500-3.400l15-4.600a2.100 2.100 0 0 1 2.700 2V37.400h-3V22.700L25.400 26.800V41.800h-3.500z" fill="#02475a"/><ellipse cx="18.800" cy="41.800" rx="6" ry="5.100" fill="#02475a"/><ellipse cx="36" cy="37.400" rx="6.100" ry="5.200" fill="#02475a"/></svg>
<div class="fl" style="left:828px;top:187.5px">Музыка</div>
<svg style="left:993px;top:125px;width:60px;height:54px" viewBox="0 0 60 54"><path d="M.3 10V5a4.700 4.700 0 0 1 4.700-4.700H22.500a3 3 0 0 1 2.600 1.500L28.300 7.500H.3z" fill="#ddb140"/><path d="M.3 9.500V6.500H55.500a4.200 4.200 0 0 1 4.200 4.200V49.500a4.200 4.200 0 0 1-4.200 4.200H4.500A4.200 4.200 0 0 1 .3 49.500z" fill="#ffdc4a" stroke="#dcae35" stroke-width=".6"/><rect x="26" y="23" width="36" height="26.500" rx="2.500" fill="#1b4a6e"/><rect x="28.200" y="25.200" width="31.600" height="22" fill="#046a8f"/><path d="M39.800 49.500h8.600v5h-8.600z" fill="#1b4a6e"/><path d="M36.900 54.300h16.900v1.700H36.900z" fill="#1b4a6e"/><path d="M13.900 36.100V50.500a4.400 4.400 0 0 0 4.400 4.400H32.500" fill="none" stroke="#fb3f4c" stroke-width="2.400"/><circle cx="13.900" cy="36.100" r="3.900" fill="#fb3f4c"/><circle cx="32.500" cy="54.900" r="3.900" fill="#fb3f4c"/></svg>
<div class="fl" style="left:953px;top:187.5px">Общедоступные</div>
<svg style="left:368px;top:233px;width:60px;height:54px" viewBox="0 0 60 54"><path d="M.3 10V5a4.700 4.700 0 0 1 4.700-4.700H22.500a3 3 0 0 1 2.600 1.500L28.300 7.500H.3z" fill="#ddb140"/><path d="M.3 9.500V6.500H55.500a4.200 4.200 0 0 1 4.200 4.200V49.500a4.200 4.200 0 0 1-4.200 4.200H4.500A4.200 4.200 0 0 1 .3 49.500z" fill="#ffdc4a" stroke="#dcae35" stroke-width=".6"/></svg>
<div class="fl" style="left:328px;top:295.5px">Рабочие столы</div>
<svg style="left:493px;top:233px;width:60px;height:54px" viewBox="0 0 60 54"><g transform="translate(-2 2)"><rect x="0" y="0" width="64" height="48.200" rx="4.500" fill="#124a72"/><rect x="3" y="3.300" width="58" height="41.600" rx="1.500" fill="#05d0fd"/><rect x="8" y="9" width="6.200" height="6.200" rx=".8" fill="#76bf45"/><rect x="16.500" y="9" width="6.200" height="6.200" rx=".8" fill="#0e5a7a"/><rect x="8" y="17.300" width="6.200" height="6.200" rx=".8" fill="#fb3f4c"/><rect x="8" y="25.500" width="6.200" height="6.200" rx=".8" fill="#ffd21f"/><circle cx="11" cy="45.7" r="9.600" fill="#fff"/><circle cx="11" cy="45.7" r="8" fill="#4d4d4d"/><path d="M7.5 49.2l6.500-6.500M8.7 42.2h5.800v5.800" fill="none" stroke="#fff" stroke-width="1.800"/></g></svg>
<div class="fl" style="left:453px;top:295.5px">Рабочий стол 1</div>
<svg style="left:618px;top:233px;width:60px;height:54px" viewBox="0 0 60 54"><path d="M.3 10V5a4.700 4.700 0 0 1 4.700-4.700H22.500a3 3 0 0 1 2.600 1.500L28.300 7.500H.3z" fill="#ddb140"/><path d="M.3 9.500V6.500H55.500a4.200 4.200 0 0 1 4.200 4.200V49.500a4.200 4.200 0 0 1-4.200 4.200H4.500A4.200 4.200 0 0 1 .3 49.500z" fill="#ffdc4a" stroke="#dcae35" stroke-width=".6"/><rect x="12.5" y="16.3" width="34.3" height="28" rx="3" fill="#02475a"/><path d="M14.9 42.099999999999994v-5.500l8-9.300 10.400 8.800 5.700-4.900 5.200 5.400v5.500z" fill="#ffdc4a" transform="translate(12.5 16.3) scale(1.005865102639296 1.0108303249097472) translate(-12.5 -16.3)"/><circle cx="35.0351" cy="23.3" r="2.7096999999999998" fill="#ffdc4a"/><circle cx="9" cy="47.6" r="9.600" fill="#fff"/><circle cx="9" cy="47.6" r="8" fill="#4d4d4d"/><path d="M5.5 51.1l6.500-6.500M6.7 44.1h5.800v5.800" fill="none" stroke="#fff" stroke-width="1.800"/></svg>
<div class="fl" style="left:578px;top:295.5px">Системные обои</div>
<svg style="left:743px;top:233px;width:60px;height:54px" viewBox="0 0 60 54"><path d="M.3 10V5a4.700 4.700 0 0 1 4.700-4.700H22.500a3 3 0 0 1 2.600 1.500L28.300 7.500H.3z" fill="#6ea82f"/><path d="M.3 9.500V6.500H55.500a4.200 4.200 0 0 1 4.200 4.200V49.500a4.200 4.200 0 0 1-4.200 4.200H4.500A4.200 4.200 0 0 1 .3 49.500z" fill="#76bf45" stroke="#5fae33" stroke-width=".6"/></svg>
<div class="fl" style="left:703px;top:295.5px">Шаблоны</div>
</div>
</div>
<div id="menu">
<div class="mi" style="top:4.4px"><svg class="ic" viewBox="0 0 16 16"><path d="M3.500 5.200V.7h9v4.500"/><rect x=".7" y="5.200" width="14.600" height="7" rx="2"/><rect x="3.500" y="10.200" width="9" height="5.100" fill="#2d7394"/><path d="M11.700 8h1.600" stroke-width="1.200"/></svg><span>Офис</span><i></i></div>
<div class="mi sel" style="top:40px"><svg class="ic" viewBox="0 0 16 16"><circle cx="8" cy="8" r="7.3"/><ellipse cx="8" cy="8" rx="3.3" ry="7.3"/><path d="M8 .7v14.6M1.3 5.2h13.4M1.3 10.8h13.4"/></svg><span style="top:-.3px">Сеть</span><i></i></div>
<div class="mi" style="top:76.1px"><svg class="ic" viewBox="0 0 16 16"><path d="M8 .7C3.900 .7.7 3.900.7 8c0 3.100 1.900 5.700 4.600 6.800 1 .4 1.900-.4 1.700-1.500l-.2-1c-.2-1.100.6-2 1.700-2h3c2.100 0 3.800-1.400 3.800-3.300C15.300 3.400 12 .7 8 .7z"/><circle cx="4.300" cy="8" r="1.100" fill="#fff" stroke="none"/><circle cx="6.200" cy="4.500" r="1.100" fill="#fff" stroke="none"/><circle cx="10" cy="3.900" r="1.100" fill="#fff" stroke="none"/><circle cx="12.300" cy="6.800" r="1.100" fill="#fff" stroke="none"/></svg><span>Графика</span><i></i></div>
<div class="mi" style="top:111.95px"><svg class="ic" viewBox="0 0 16 16"><rect x=".7" y=".7" width="14.600" height="14.600" rx="1.500"/><path d="M5.700 4.100v7.800L12 8z" fill="#fff" stroke="none"/></svg><span style="top:-.3px">Мультимедиа</span><i></i></div>
<div class="mi" style="top:147.8px"><svg class="ic" viewBox="0 0 16 16"><circle cx="8" cy="8" r="7.300"/><path d="M13.300 3L7.200 8l6.100 5M14.800 5.500L10.500 8l4.300 2.600"/></svg><span>Научные</span><i></i></div>
<div class="mi" style="top:183.65px"><svg class="ic" viewBox="0 0 16 16"><path d="M4.500 5.200h7c2 0 3 1.500 3.500 4.300.4 2.300.3 3.700-.7 4-1.200.3-2-.9-3.200-2.600H4.900c-1.200 1.700-2 2.900-3.200 2.600-1-.3-1.100-1.700-.7-4 .5-2.800 1.500-4.300 3.500-4.300z"/><path d="M8 5.200c0-2 .8-2.800 2.500-3.200l1.800-.6"/><path d="M4.600 7v3M3.100 8.500h3" stroke-width="1.300"/><circle cx="10.600" cy="7.600" r=".6" fill="#fff" stroke="none"/><circle cx="12.300" cy="7.600" r=".6" fill="#fff" stroke="none"/><circle cx="10.600" cy="9.400" r=".6" fill="#fff" stroke="none"/><circle cx="12.300" cy="9.400" r=".6" fill="#fff" stroke="none"/></svg><span>Игры</span><i></i></div>
<div class="mi" style="top:219.5px"><svg class="ic" viewBox="0 0 16 16"><path d="M1.300 14.700c-.7-.7-.7-1.500 0-2.200l7.400-7.400c-.5-1.600 0-3 1.100-3.900 1-.8 2.300-1 3.400-.6L11 2.900l.3 1.800 1.800.3 2.200-2.200c.4 1.100.2 2.400-.6 3.400-.9 1.100-2.300 1.600-3.900 1.100l-7.400 7.400c-.7.700-1.500.7-2.100 0z"/><path d="M1 1l1.800.6 2.600 3.600-.6.600-3.600-2.600zM5 5.400l2.300 2.300M9.300 9.800l1.100-1.100 4.300 4.300c.5.500.5 1.300 0 1.800s-1.300.5-1.800 0z"/></svg><span>Утилиты</span><i></i></div>
<div class="mi" style="top:255.35px"><svg class="ic" viewBox="0 0 16 16"><circle cx="8" cy="8" r="2.500"/><path d="M6.700.8h2.600l.4 2.100 1.400.6 1.800-1.200 1.800 1.800-1.200 1.800.6 1.400 2.100.4v2.600l-2.100.4-.6 1.400 1.200 1.800-1.800 1.800-1.800-1.200-1.400.6-.4 2.100H6.700l-.4-2.100-1.400-.6-1.800 1.200-1.800-1.800 1.200-1.800-.6-1.400-2.100-.4V6.700l2.100-.4.6-1.400-1.200-1.800 1.800-1.800 1.800 1.200 1.400-.6z" transform="translate(8 8) scale(.93) translate(-8 -8)"/></svg><span>Системные</span><i></i></div>
<div class="msep" style="top:296px"></div>
<div class="mi" style="top:301.2px"><svg class="ic" viewBox="0 0 16 16"><path d="M1.600 4.500A7.300 7.300 0 1 1 .7 8"/><path d="M.4 2.300l1 2.500 2.600-.8" /><path d="M5.500 8.500H8l3-3.500"/><circle cx="8" cy="3" r=".6" fill="#fff" stroke="none"/><circle cx="13" cy="8" r=".6" fill="#fff" stroke="none"/><circle cx="8" cy="13" r=".6" fill="#fff" stroke="none"/><circle cx="3" cy="8" r=".6" fill="#fff" stroke="none"/></svg><span style="top:-.3px">Последние</span><i></i></div>
<div class="mi" style="top:337.05px"><svg class="ic" viewBox="0 0 16 16"><path d="M.8 3h14.400M.8 8h14.400M.8 13h14.400"/><circle cx="5" cy="3" r="1.300" fill="#fff"/><circle cx="10.500" cy="8" r="1.300" fill="#fff"/><circle cx="6" cy="13" r="1.300" fill="#fff"/></svg><span style="top:-.3px">Панель управления</span></div>
<div class="mi" style="top:372.9px"><svg class="ic" viewBox="0 0 16 16"><path d="M.8 14.800V1.200h4.400l1 1.800h9v11.800z"/><path d="M3.600 9c1.200-1.700 2.700-2.500 4.400-2.500s3.200.8 4.400 2.500c-1.200 1.700-2.700 2.500-4.400 2.500S4.800 10.700 3.600 9z"/><circle cx="8" cy="9" r="1.200" fill="#fff"/></svg><span>Менеджер файлов</span></div>
<div class="mi" style="top:408.75px"><svg class="ic" viewBox="0 0 16 16"><circle cx="6.800" cy="6.800" r="6"/><path d="M11.200 11.200l4.300 4.300"/></svg><span>Поиск...</span></div>
<div class="msep" style="top:449px"></div>
<div class="mi" style="top:454.6px"><svg class="ic" viewBox="0 0 16 16"><path d="M1.500 1.800l6.500-1v14.400l-6.500-1zM5.800 7.500v1.500"/><path d="M10 8h3" stroke-width="1.600"/><path d="M12.400 5.300L15.500 8l-3.100 2.700z" fill="#fff" stroke="none"/></svg><span>Завершение работы...</span></div>
</div>
<div id="sub">
<div class="si" style="top:4.4px"><svg viewBox="0 0 16 16"><circle cx="8" cy="8" r="7.700" fill="#fff"/><path d="M12.300 4.200A5.700 5.700 0 1 0 12.300 11.800" fill="none" stroke="#0d3b73" stroke-width="2.100"/><circle cx="8.600" cy="8" r="2.300" fill="#f5333f"/><path d="M16 5.800L13.800 8 16 10.200z" fill="#2d7394"/></svg><span>Веб-браузер Chromium-gost</span></div>
<div class="si" style="top:40.3px"><svg viewBox="0 0 16 16"><circle cx="8" cy="8" r="7.500" fill="#5ea7f0"/><path d="M8 8L1.500 4.200A7.500 7.500 0 0 1 14.500 4.200z" fill="#1b7fe0"/><path d="M8 8l6.500-3.800A7.500 7.500 0 0 1 8 15.500z" fill="#a3cdf5"/><circle cx="8" cy="8" r="3.400" fill="#cfe4f8"/><circle cx="8" cy="8" r="2.500" fill="#1a8cf0"/></svg><span>Веб-браузер Chromium</span></div>
<div class="si" style="top:76.2px"><svg viewBox="0 0 48 48"><path d="M33.500 3.100C38 6 41 8 42.400 9l1.100-1c1.500 1.500 2.300 3.200 2.300 3.200 1.700 3.800 2.200 7.800 1.900 11.700-.2 4.100-.7 7.600-1.900 10.600-2.800 3.500-6.800 5.500-11.800 3.900 1-3.400 2-7.400 2.200-12.400.3-4 -.2-6-.6-7.700-.6-5.300-.6-10.300-1.100-14.200z" fill="#ffd23f"/><circle cx="22.500" cy="18.500" r="16.300" fill="#0da5ef" stroke="#14456b" stroke-width="2.300"/><g fill="none" stroke="#14456b" stroke-width="2"><ellipse cx="22.300" cy="18.500" rx="8.400" ry="16.300"/><path d="M7 14.800H38.500M8 27.100H37"/></g><path d="M5.300 5l1.500 3.500c3.200-1.200 6.200-1.300 8.800-.9l3.900-.6-2.200 4.700 5 1.700-3.300 3.400.6 3.300-4.500 1.700c-.6 1.200-.6 2.200 0 3.300.9 1.400 1.900 1.900 3.300 2l10.100-.9.500 2.300-5 1.100-4.400 2.800c2.400 2.100 4.400 3.100 6.600 3.300 2.800 0 5.800-.7 7.800-1.700v3.400c4 .6 8-.9 11.800-3.900-1.800 5.500-5.800 10-11.800 12.500-4 1.500-8 1.700-12.200 1.200C15 46.500 8 42 4 36 1 31.500 0 27.500 0 24c0-5 1.500-9 3.400-12.300.6-2.200 1.400-4.700 1.900-6.700z" fill="#ff9500"/><path d="M3.400 11.700C6 9 10 7.500 15.600 7.600l3.900-.6-2.200 4.700 5 1.700-3.300 3.400.6 3.300-6.100-.6-1.800-6.100c-3.700-.4-6.200.1-8.300 1.100z" fill="#ffb000"/></svg><span>Веб-браузер Firefox</span></div>
<div class="si" style="top:111.9px"><svg viewBox="0 0 16 16"><path d="M3 4.800c-.7 0-1.300.5-1.400 1.200 1.100-.3 1.500.3 1.700 1.700.3 2.200 1.500 3.400 3.400 3.500M12 2.600c.9.100 1.300.8 1 2.200-.6 3.500-2.700 5.800-6.300 5.800M9.500 2L6 14.500" fill="none" stroke="#16c0f0" stroke-width="1.500" stroke-linecap="round"/><circle cx="13.300" cy="1.600" r=".8" fill="none" stroke="#16c0f0" stroke-width=".5"/></svg><span style="top:-.2px">Мессенджер Psi+</span></div>
<div class="si" style="top:148.4px"><svg viewBox="0 0 16 16"><path d="M2.300 1.500h11.400v6.500c0 3.200-2.300 5.600-5.700 7.300-3.400-1.700-5.700-4.100-5.700-7.300z" fill="#f03e4d"/><path d="M13.700 1.500v4.200L3.700 12.300c-.8-1.100-1.300-2.300-1.400-3.600L12.200 1.500z" fill="#1d4360"/></svg><span>Настройка межсетевого экрана</span></div>
<div class="si" style="top:183.6px"><svg viewBox="0 0 16 16"><circle cx="8" cy="8" r="7.300" fill="#14a8ee"/><path d="M2 5.500l2.600 1.300c1.500-1.200 3-1.700 4.300-1.500 1.700.2 3.200 1.500 3.700 3.800l.3 2.500c-1.400 1.400-3 2-5 2-2.300 0-4-.8-5-2.300-.8-1.200-1.200-3-.9-5.800z" fill="#ffd21f"/><path d="M5 9.300c1.300.9 3 .9 4.500-.1" fill="none" stroke="#e8a800" stroke-width=".8"/></svg><span>Почта Thunderbird</span></div>
</div>
<div id="tb">
<div class="abs" style="left:0;top:0;width:47px;height:47px;background:#84b0c7"></div>
<svg style="left:9px;top:9.500px;width:28px;height:29px" viewBox="0 0 30 31"><path d="M15 1.500l3.400 9.700 10.300.2-8.200 6.200 3 9.900L15 21.600l-8.500 5.900 3-9.900-8.200-6.200 10.300-.2z" fill="none" stroke="#fff" stroke-width="1.400" stroke-linejoin="miter"/><path d="M15 7.500l2.100 6 6.300.1-5 3.800 1.800 6L15 19.800l-5.200 3.600 1.800-6-5-3.800 6.300-.1z" fill="#f2f2f2"/><path d="M15 7.500l2.100 6 6.300.1-5 3.800-8.600 0-3.200-3.800 6.300-.1z" fill="#d4d8db" opacity=".7"/></svg>
<svg style="left:54px;top:9px;width:32px;height:28px" viewBox="0 0 32 28" fill="none" stroke="#fff" stroke-width="2"><path d="M7 19H3a2 2 0 0 1-2-2V3a2 2 0 0 1 2-2h21a2 2 0 0 1 2 2v6"/><rect x="7" y="9.500" width="24" height="17.500" rx="2" fill="#2d7394"/><path d="M15.500 4.500h2M19 4.500h2M22.500 4.500h2M21 13.500h2M24.500 13.500h2M28 13.500h2" stroke-width="1.600"/></svg>
<svg style="left:101px;top:9px;width:32px;height:28px" viewBox="0 0 32 28" fill="none" stroke="#fff" stroke-width="2"><path d="M1 27V2.500a1.500 1.500 0 0 1 1.500-1.500h6a1.500 1.500 0 0 1 1.500 1.500V5h19.500a1.500 1.500 0 0 1 1.500 1.500V27z"/><path d="M1.500 5H10" stroke-width="1.500"/><path d="M9 17.500c2-3 4.300-4.300 7-4.300s5 1.300 7 4.300c-2 3-4.300 4.300-7 4.300s-5-1.300-7-4.300z" stroke-width="1.700"/><circle cx="16" cy="17.500" r="1.700" fill="#fff" stroke="none"/><path d="M16 9.500v2M10.500 11l1.200 1.600M21.500 11l-1.200 1.600" stroke-width="1.500"/></svg>
<div class="abs" style="left:143px;top:5px;width:1px;height:38px;background:#80aec5"></div>
<svg style="left:160px;top:8.300px;width:29px;height:29px" viewBox="0 0 29 29"><path d="M14.500 .3L28.700 14.500H24.500V27a1.500 1.500 0 0 1-1.500 1.500H6A1.500 1.500 0 0 1 4.500 27V14.500H.3z" fill="#76bf45"/><rect x="10.500" y="15.500" width="8" height="6.500" fill="#fff"/></svg>
<div class="abs" style="left:192px;top:14px;font-size:13px;line-height:18px;white-space:nowrap;color:#fff">Домашняя - Мен…</div>
<svg style="left:1716px;top:10.500px;width:24px;height:26px" viewBox="0 0 24 26" fill="none" stroke="#fff" stroke-width="2"><path d="M1 9h5.800L14.500 1.800v22.800L6.800 17H1z" stroke-linejoin="miter"/><path d="M18.800 7.500c2.300 3.400 2.300 7.800 0 11.200"/></svg>
<svg style="left:1753px;top:8px;width:34px;height:30px" viewBox="0 0 34 30" fill="none" stroke="#fff" stroke-width="2.100"><path d="M11.500 15H3.500a2 2 0 0 1-2-2V3a2 2 0 0 1 2-2h17a2 2 0 0 1 2 2v8.500"/><rect x="11.500" y="11.500" width="21" height="14.300" rx="2" fill="#2d7394"/><path d="M22 25.800v3.200M17 29.200h10"/><path d="M17.500 18.500l3 3 5-5.500" stroke-width="1.800"/><path d="M4 16.500v6h5M7.300 19.800l2.500 2.700-2.500 2.700" stroke-width="1.600"/></svg>
<div class="abs" style="left:1793px;top:7px;width:32px;height:32px;border:1px solid #6a9fb9;border-radius:3px;font-size:18px;line-height:28px;text-align:center">en</div>
<div class="abs" style="left:1834px;top:4px;width:1px;height:39px;background:#80aec5"></div>
<div class="abs" style="left:1844px;top:5.500px;width:62px;text-align:center;font-size:19px;line-height:22px">18:52</div>
<div class="abs" style="left:1834px;top:25px;width:82px;text-align:center;font-size:12.500px;line-height:16px;white-space:nowrap">ЧТ, 22 ДЕК</div>
<div class="abs" style="left:1914px;top:0;width:5px;height:47px;background:#84b0c7"></div>
</div>
</body>
</html>
